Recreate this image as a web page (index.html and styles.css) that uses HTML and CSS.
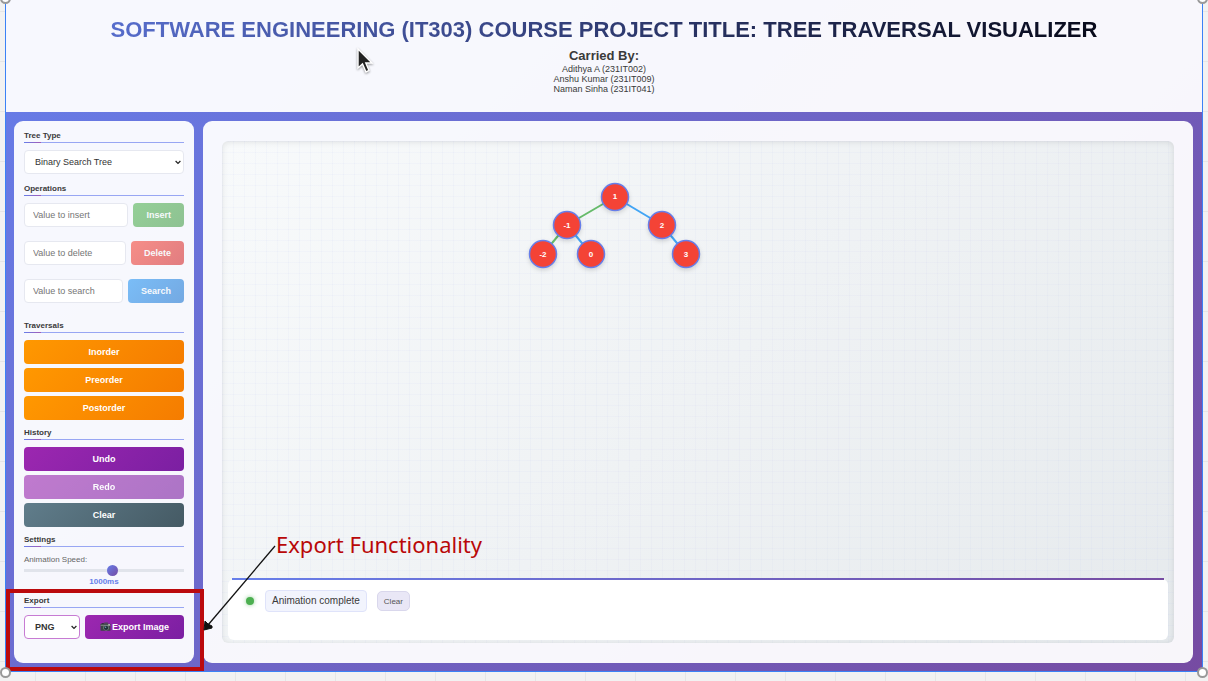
FILE: index.html
```html
<!DOCTYPE html>
<html lang="en">
<head>
<meta charset="utf-8">
<title>Tree Traversal Visualizer</title>
<link rel="stylesheet" href="styles.css">
</head>
<body>
<div class="board">
  <div class="app">
    <header class="header">
      <h1 class="title">SOFTWARE ENGINEERING (IT303) COURSE PROJECT TITLE: TREE TRAVERSAL VISUALIZER</h1>
      <h2 class="subtitle">Carried By:</h2>
      <p class="author">Adithya A (231IT002)</p>
      <p class="author">Anshu Kumar (231IT009)</p>
      <p class="author">Naman Sinha (231IT041)</p>
    </header>
    <div class="workspace">
      <aside class="sidebar">
        <section class="section">
          <h3 class="section-title"><label for="tree-type">Tree Type</label></h3>
          <select id="tree-type" class="field tree-type"><option>Binary Search Tree</option></select>
        </section>
        <section class="section operations">
          <h3 class="section-title">Operations</h3>
          <div class="row"><input class="field" type="text" placeholder="Value to insert" aria-label="Value to insert"><button class="btn green" type="button">Insert</button></div>
          <div class="row"><input class="field" type="text" placeholder="Value to delete" aria-label="Value to delete"><button class="btn red" type="button">Delete</button></div>
          <div class="row"><input class="field" type="text" placeholder="Value to search" aria-label="Value to search"><button class="btn blue" type="button">Search</button></div>
        </section>
        <section class="section">
          <h3 class="section-title">Traversals</h3>
          <div class="stack">
            <button class="btn orange" type="button">Inorder</button>
            <button class="btn orange" type="button">Preorder</button>
            <button class="btn orange" type="button">Postorder</button>
          </div>
        </section>
        <section class="section">
          <h3 class="section-title">History</h3>
          <div class="stack">
            <button class="btn purple" type="button">Undo</button>
            <button class="btn purple faded" type="button">Redo</button>
            <button class="btn slate" type="button">Clear</button>
          </div>
        </section>
        <section class="section">
          <h3 class="section-title">Settings</h3>
          <label class="speed-label" for="speed">Animation Speed:</label>
          <input id="speed" class="speed" type="range" min="100" max="1720" value="1000">
          <output class="speed-value" for="speed">1000ms</output>
        </section>
        <section class="section">
          <h3 class="section-title">Export</h3>
          <div class="export-row">
            <select class="field format" aria-label="Export format"><option>PNG</option></select>
            <button class="btn purple export" type="button">
              <svg class="camera" viewBox="0 0 20 18" aria-hidden="true">
                <path d="M3 2h4v2H3z" fill="#252b2b"/>
                <path d="M7 3l1-2h6l1 2z" fill="#46504f"/>
                <rect x="1" y="3" width="18" height="13" rx="1" fill="#3c4645"/>
                <rect x="1" y="5" width="18" height="2" fill="#78817d"/>
                <circle cx="11" cy="10.500" r="5" fill="#7f8b8a"/>
                <circle cx="11" cy="10.500" r="4" fill="#203038"/>
                <circle cx="10" cy="9.500" r="1.500" fill="#6ba0b5"/>
                <rect x="15" y="4" width="3" height="2" fill="#dce5df"/>
              </svg>
              Export Image
            </button>
          </div>
        </section>
      </aside>
      <main class="panel">
        <div class="canvas">
          <svg class="tree" role="img" aria-label="Binary search tree">
            <g class="edges">
              <path class="left" d="M393 56L345 84M345 84L321 113"/>
              <path class="right" d="M393 56L440 84M345 84L369 113M440 84L464 113"/>
            </g>
            <g class="nodes">
              <circle cx="393" cy="56" r="13.500"/><circle cx="345" cy="84" r="13.500"/><circle cx="440" cy="84" r="13.500"/>
              <circle cx="321" cy="113" r="13.500"/><circle cx="369" cy="113" r="13.500"/><circle cx="464" cy="113" r="13.500"/>
            </g>
            <g class="keys">
              <text x="393" y="58">1</text><text x="345" y="87">-1</text><text x="440" y="87">2</text>
              <text x="321" y="116">-2</text><text x="369" y="116">0</text><text x="464" y="116">3</text>
            </g>
          </svg>
          <div class="status">
            <span class="dot"></span>
            <span class="message">Animation complete</span>
            <button class="clear" type="button">Clear</button>
          </div>
        </div>
      </main>
    </div>
  </div>
  <i class="handle top start"></i><i class="handle top end"></i>
  <div class="highlight"></div>
  <i class="handle bottom start"></i><i class="handle bottom end"></i>
  <svg class="arrow" viewBox="0 0 74 90" aria-hidden="true">
    <path d="M72 4L5 83" stroke="#111" stroke-width="1.300" fill="none"/>
    <path d="M1 88L2 79L5 82L9 84L9 86z" fill="#111" stroke="#111"/>
  </svg>
  <p class="note">Export Functionality</p>
  <svg class="cursor" viewBox="0 0 18 28" aria-hidden="true">
    <path d="M2 2V21L6.500 17L10 25L13 23.500L9.800 16H16z" fill="#222" stroke="#fff" stroke-width="1.400"/>
  </svg>
</div>
</body>
</html>
```
FILE: styles.css
```css
* { box-sizing: border-box; }
body { margin: 0; font-family: "Liberation Sans", Arial, sans-serif; color: #3a3a3a; }
h1, h2, h3, p { margin: 0; }
button, input, select { font: inherit; margin: 0; }

.board {
  position: relative;
  display: flex;
  min-height: 100vh;
  padding: 0 5px 9px;
  overflow: hidden;
  background-color: #f2f2f2;
  background-image: linear-gradient(#e6e6e6 1px, transparent 1px), linear-gradient(90deg, #e6e6e6 1px, transparent 1px);
  background-size: 50px 50px;
  background-position: 35px 11px;
}
.app {
  flex: 1;
  display: flex;
  flex-direction: column;
  min-width: 0;
  border: 1px solid #3b82f6;
  border-top: 0;
  background: linear-gradient(135deg, #667eea, #764ba2);
}
.header {
  padding: 16px 16px 18px;
  text-align: center;
  background: rgba(255, 255, 255, .95);
}
.title {
  font-size: 22px;
  line-height: 28px;
  white-space: nowrap;
  background: linear-gradient(135deg, #5f77de, #000008);
  background-clip: text;
  -webkit-background-clip: text;
  color: transparent;
}
.subtitle { margin-top: 4px; font-size: 13px; line-height: 16px; }
.author { font-size: 9px; line-height: 10px; }

.workspace { flex: 1; display: flex; gap: 9px; padding: 9px 9px 8px 8px; }
.sidebar, .panel { border-radius: 9px; background: rgba(255, 255, 255, .95); }
.sidebar {
  flex: 0 0 180px;
  display: flex;
  flex-direction: column;
  gap: 6px;
  min-width: 0;
  padding: 8px 10px;
}
.section-title {
  position: relative;
  margin-bottom: 7px;
  border-bottom: 1px solid #98a6f3;
  font-size: 8px;
  line-height: 13px;
}
.section-title::after {
  content: "";
  position: absolute;
  left: 0;
  bottom: -1px;
  width: 17px;
  height: 1px;
  background: linear-gradient(90deg, #667eea, #a35bb5);
}
.field {
  display: block;
  height: 24px;
  min-width: 0;
  border: 1px solid #e6e8f0;
  border-radius: 4px;
  background: #fff;
  color: #333;
  font-size: 9px;
}
input.field { flex: 1; width: 0; padding: 0 8px; }
input.field::placeholder { color: #757575; }
select.field {
  appearance: none;
  padding: 0 16px 0 10px;
  background: #fff url("data:image/svg+xml,%3Csvg xmlns='http://www.w3.org/2000/svg' viewBox='0 0 6 5'%3E%3Cpath d='M.6 1L3 3.500L5.400 1' fill='none' stroke='%23222' stroke-width='1.200'/%3E%3C/svg%3E") right 2px center / 6px 5px no-repeat;
}
.tree-type { width: 100%; margin-bottom: 2px; }
.operations { display: flex; flex-direction: column; padding-bottom: 10px; }
.row { display: flex; gap: 5px; }
.row + .row { margin-top: 14px; }
.btn {
  height: 24px;
  padding: 0 13px;
  border: 0;
  border-radius: 4px;
  color: #fff;
  font-size: 9px;
  font-weight: bold;
}
.row .btn { color: #f7f9fc; }
.green { background: linear-gradient(135deg, #94cf97, #8ec292); }
.red { background: linear-gradient(135deg, #f68e88, #e17d80); }
.blue { background: linear-gradient(135deg, #7abdf7, #74a9e2); }
.orange { background: linear-gradient(135deg, #ff9800, #f57c00); }
.purple { background: linear-gradient(135deg, #9c27b0, #7b1fa2); }
.slate { background: linear-gradient(135deg, #607d8b, #455a64); }
.faded { opacity: .6; }
.stack { display: grid; gap: 4px; }
.speed-label { display: block; color: #666; font-size: 8px; line-height: 11px; }
.speed {
  display: block;
  width: 100%;
  height: 11px;
  appearance: none;
  background: linear-gradient(#e1e4eb, #e1e4eb) center / 100% 3px no-repeat;
}
.speed::-webkit-slider-thumb {
  appearance: none;
  width: 11px;
  height: 11px;
  border-radius: 50%;
  background: linear-gradient(135deg, #667eea, #764ba2);
}
.speed-value { display: block; color: #667eea; font-size: 8px; font-weight: bold; line-height: 12px; text-align: center; }
.export-row { display: flex; gap: 5px; }
.format { flex: none; width: 56px; border-color: #c77bd3; font-weight: bold; }
.export { flex: 1; display: flex; align-items: center; justify-content: center; gap: 1px; padding: 0; white-space: nowrap; }
.camera { flex: none; width: 11px; height: 10px; }

.panel { flex: 1; display: flex; min-width: 0; padding: 20px 19px; }
.canvas {
  flex: 1;
  display: flex;
  flex-direction: column;
  min-width: 0;
  padding: 0 6px 3px;
  border-radius: 6px;
  background:
    linear-gradient(rgba(102, 126, 234, .03) 1px, transparent 1px) 0 0 / 11px 11px,
    linear-gradient(90deg, rgba(102, 126, 234, .03) 1px, transparent 1px) 0 0 / 11px 11px,
    linear-gradient(135deg, #f8fafb, #e6eaed);
  box-shadow: inset 0 1px 6px rgba(0, 0, 0, .1);
}
.tree { flex: 1; width: 100%; min-height: 140px; margin-left: -6px; overflow: visible; }
.edges { fill: none; stroke-width: 2; }
.left { stroke: #66bb6a; }
.right { stroke: #42a5f5; }
.nodes { fill: #f44336; stroke: #667eea; stroke-width: 1.500; filter: drop-shadow(0 2px 2px rgba(0, 0, 0, .14)); }
.keys { fill: #fff; font-size: 8px; font-weight: bold; text-anchor: middle; }
.status {
  position: relative;
  display: flex;
  align-items: flex-start;
  height: 61px;
  padding: 11px 18px;
  border-radius: 6px;
  background: #fff;
}
.status::before {
  content: "";
  position: absolute;
  top: -1px;
  left: 4px;
  right: 4px;
  height: 2px;
  background: linear-gradient(90deg, #667eea, #764ba2);
}
.dot { width: 8px; height: 8px; margin-top: 7px; border-radius: 50%; background: #4caf50; box-shadow: 0 0 4px rgba(76, 175, 80, .6); }
.message {
  margin-left: 11px;
  padding: 0 6px;
  border: 1px solid #dfe3fa;
  border-radius: 4px;
  background: #f2f4fd;
  font-size: 10px;
  line-height: 20px;
}
.clear { height: 20px; margin: 1px 0 0 10px; padding: 0 6px; border: 1px solid #d9d7ec; border-radius: 5px; background: #e9e7f6; color: #555; font-size: 8px; }

.highlight { position: absolute; top: 589px; left: 6px; width: 198px; height: 82px; border: 4px solid #bb0a0d; }
.handle { position: absolute; width: 11px; height: 11px; border: 2px solid #999; border-radius: 50%; background: #fff; }
.top { top: -7px; }
.bottom { bottom: 3px; }
.start { left: 0; }
.end { right: 0; }
.arrow { position: absolute; top: 542px; left: 203px; width: 74px; height: 90px; }
.note { position: absolute; top: 529px; left: 276px; color: #b90808; font-family: "Noto Sans", sans-serif; font-size: 22px; line-height: 30px; white-space: nowrap; }
.cursor { position: absolute; top: 47px; left: 356px; width: 18px; height: 28px; filter: drop-shadow(0 1px 1px rgba(0, 0, 0, .4)); }
```
